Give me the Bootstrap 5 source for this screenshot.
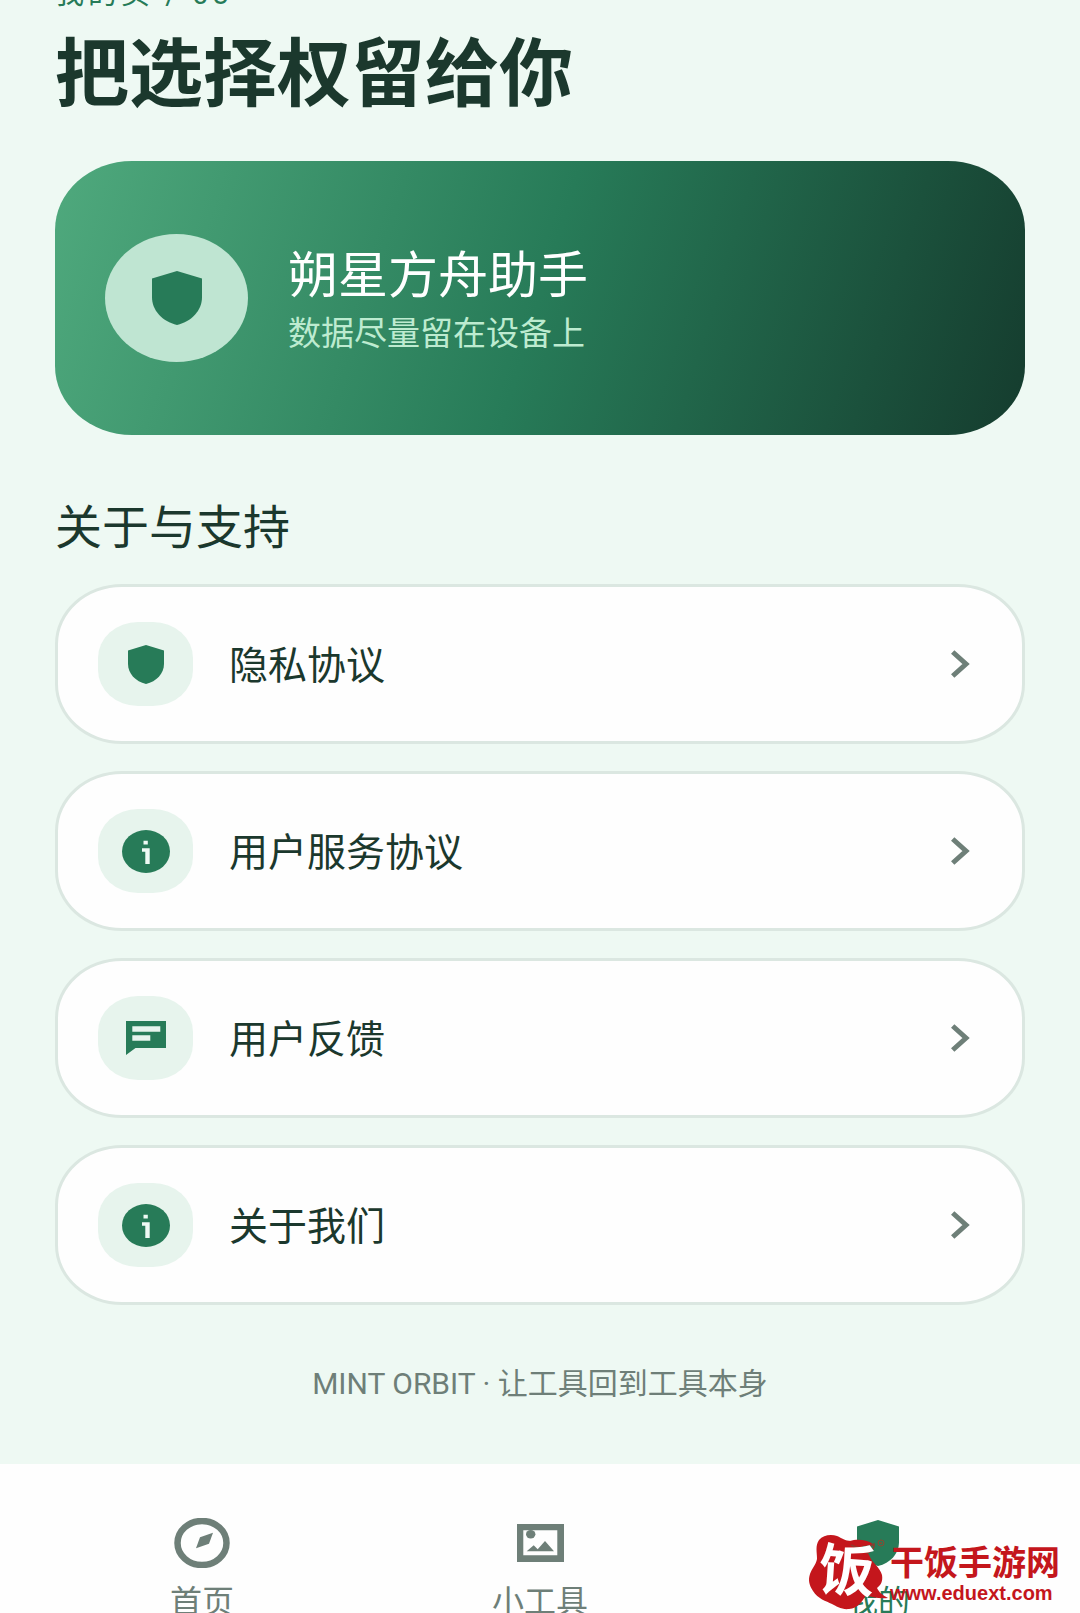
<!DOCTYPE html>
<html lang="zh-CN">
<head>
<meta charset="utf-8">
<meta name="viewport" content="width=device-width, initial-scale=1">
<title>朔星方舟助手</title>
<link href="https://cdn.jsdelivr.net/npm/bootstrap@5.3.0/dist/css/bootstrap.min.css" rel="stylesheet">
<style>
:root { --mint: #277b58; --ink: #1b382d; --soft: #6e7f78; }
body { height: 100vh; background: #eef9f3; color: var(--ink); font-family: Roboto, "Noto Sans CJK SC", sans-serif; }
svg { display: block; flex: none; }
.page-body { padding: 0 55px; }
/* the page is scrolled so that only the foot of this line shows */
.eyebrow { margin: -26px 0 0; font-size: 29px; line-height: 40px; letter-spacing: 4px; color: var(--mint); }
.page-title { margin: 16px 0 0; font-size: 74px; line-height: 90px; }
.hero { margin-top: 41px; padding: 0 50px; min-height: 274px; gap: 40px; border-radius: 77px / 69px; background: linear-gradient(107deg, #4fa97d, #277b58 50%, #153c2e); }
.hero-icon { width: 143px; height: 128px; background: #bfe5d2; color: var(--mint); }
.hero-text { padding-top: 8px; }
.hero-name { font-size: 50px; line-height: 64px; color: #fff; }
.hero-note { font-size: 33px; line-height: 52px; color: #bdebd0; }
.section-title { margin: 63px 0 0; font-size: 47px; line-height: 60px; }
.menu-list { margin-top: 26px; gap: 27px; }
.menu-item { height: 160px; padding: 0 52px 0 40px; gap: 36px; background: #fefefe; border: 3px solid #dbe7e1; border-radius: 67px / 60px; font-size: 39px; line-height: 54px; color: var(--ink); }
.menu-item .label-text { padding-top: 4px; }
.menu-icon { width: 95px; height: 84px; border-radius: 40px / 36px; background: #e7f4ed; color: var(--mint); }
.chevron { color: var(--soft); }
.slogan { margin: 58px 0 0; padding-bottom: 59px; font-size: 30px; line-height: 42px; color: var(--soft); }
.tab-bar { padding: 54px 33px 20px; background: #fefefe; }
.tab-item { gap: 14px; font-size: 32px; line-height: 40px; color: var(--soft); }
.tab-item.current { color: var(--mint); }
.tab-icon { height: 50px; }
.watermark { right: 20px; bottom: 2px; gap: 5px; color: #c4161c; }
.seal { width: 76px; height: 76px; }
.seal-char { inset: 0; font-size: 56px; font-weight: 700; line-height: 74px; color: #fff; transform: rotate(4deg); }
.site-name { font-size: 34px; font-weight: 700; line-height: 40px; }
.site-url { font: 700 20px/20px "Liberation Sans", sans-serif; }
</style>
<script src="https://cdn.jsdelivr.net/npm/bootstrap@5.3.0/dist/js/bootstrap.bundle.min.js"></script>
</head>
<body class="position-relative overflow-hidden">
<svg class="d-none" aria-hidden="true">
  <symbol id="shield" viewBox="0 0 36 39" preserveAspectRatio="none"><path fill="currentColor" d="M18 0 36 5.500V19C36 28.500 28.500 36.500 18 39 7.500 36.500 0 28.500 0 19V5.500Z"/></symbol>
  <symbol id="info" viewBox="0 0 48 43"><ellipse cx="24" cy="21.500" rx="24" ry="21.500" fill="currentColor"/><path fill="#eefaf4" d="M21.500 10.700h4.300v3.700h-4.300zM20 18.300h7.700V34h-4.400V21.800H20z"/></symbol>
  <symbol id="chat" viewBox="0 0 40 34"><path fill="currentColor" fill-rule="evenodd" d="M0 0h40v27H9.500L0 34zM6.300 5.300v5.400h28V5.300zM6.300 14.300v5.400h18v-5.400z"/></symbol>
  <symbol id="chev" viewBox="0 0 19 28"><path fill="none" stroke="currentColor" stroke-width="5" d="M1.700 2 15 14 1.700 26"/></symbol>
</svg>

<main class="page-body">
  <p class="eyebrow">我的页 / 03</p>
  <h1 class="page-title fw-bold">把选择权留给你</h1>

  <section class="hero d-flex align-items-center">
    <span class="hero-icon rounded-circle d-flex align-items-center justify-content-center"><svg width="50" height="54"><use href="#shield"/></svg></span>
    <div class="hero-text">
      <div class="hero-name">朔星方舟助手</div>
      <div class="hero-note">数据尽量留在设备上</div>
    </div>
  </section>

  <h2 class="section-title fw-normal">关于与支持</h2>
  <nav class="menu-list d-flex flex-column" aria-label="关于与支持">
    <a href="#" class="menu-item d-flex align-items-center text-decoration-none">
      <span class="menu-icon d-flex align-items-center justify-content-center"><svg width="36" height="39"><use href="#shield"/></svg></span>
      <span class="label-text flex-grow-1">隐私协议</span>
      <svg class="chevron" width="19" height="28"><use href="#chev"/></svg>
    </a>
    <a href="#" class="menu-item d-flex align-items-center text-decoration-none">
      <span class="menu-icon d-flex align-items-center justify-content-center"><svg width="48" height="43"><use href="#info"/></svg></span>
      <span class="label-text flex-grow-1">用户服务协议</span>
      <svg class="chevron" width="19" height="28"><use href="#chev"/></svg>
    </a>
    <a href="#" class="menu-item d-flex align-items-center text-decoration-none">
      <span class="menu-icon d-flex align-items-center justify-content-center"><svg width="40" height="34"><use href="#chat"/></svg></span>
      <span class="label-text flex-grow-1">用户反馈</span>
      <svg class="chevron" width="19" height="28"><use href="#chev"/></svg>
    </a>
    <a href="#" class="menu-item d-flex align-items-center text-decoration-none">
      <span class="menu-icon d-flex align-items-center justify-content-center"><svg width="48" height="43"><use href="#info"/></svg></span>
      <span class="label-text flex-grow-1">关于我们</span>
      <svg class="chevron" width="19" height="28"><use href="#chev"/></svg>
    </a>
  </nav>
  <p class="slogan text-center">MINT ORBIT · 让工具回到工具本身</p>
</main>

<nav class="tab-bar d-flex" aria-label="主导航">
  <a href="#" class="tab-item d-flex flex-column align-items-center flex-fill w-100 text-decoration-none">
    <span class="tab-icon d-flex align-items-center"><svg width="56" height="50" viewBox="0 0 56 50"><ellipse cx="28" cy="25" rx="24.500" ry="22" fill="none" stroke="currentColor" stroke-width="6.500"/><path fill="currentColor" d="M39 14.700 35 25.700 22 30.300 26 19.300z"/></svg></span>
    <span>首页</span>
  </a>
  <a href="#" class="tab-item d-flex flex-column align-items-center flex-fill w-100 text-decoration-none">
    <span class="tab-icon d-flex align-items-center"><svg width="47" height="38" viewBox="0 0 47 38"><path fill="currentColor" fill-rule="evenodd" d="M0 0h47v38H0zM6.300 6.300v25h34v-25z"/><ellipse cx="13.700" cy="10.300" rx="4.700" ry="4.200" fill="currentColor"/><path fill="currentColor" d="m9.700 27.300 7-6 4 4L28 17l9 10.300z"/></svg></span>
    <span>小工具</span>
  </a>
  <a href="#" class="tab-item current d-flex flex-column align-items-center flex-fill w-100 text-decoration-none" aria-current="page">
    <span class="tab-icon d-flex align-items-center"><svg width="42" height="46"><use href="#shield"/></svg></span>
    <span>我的</span>
  </a>
</nav>

<div class="watermark position-absolute d-flex align-items-center">
  <div class="seal position-relative">
    <svg width="76" height="76" viewBox="0 0 76 76" overflow="visible">
      <path fill="#c4161c" d="M10 5C14 0 22-1 28 1C33 3 36 6 42 6C50 7 56 12 60 20C63 28 71 32 73 40C74 46 72 50 68 53C70 57 73 60 79 63C70 64 62 62 57 60C53 67 49 73 40 74C33 75 27 71 23 69C17 66 9 64 4 56C0 50-1 45 1 39C3 33 7 30 8 24C8 17 6 11 10 5Z"/>
      <path fill="#c4161c" d="M41 6C47 4 57 4 64 9C58 12 48 12 41 6Z"/>
      <path fill="none" stroke="#8f3a2c" stroke-width="1.500" d="M42 10C49 14 58 14 65 9C66 13 62 17 57 18"/>
      <circle cx="72" cy="8" r="3" fill="none" stroke="#8f4630" stroke-width="1"/><circle cx="72" cy="8" r="1" fill="#8f4630"/>
    </svg>
    <span class="seal-char position-absolute text-center">饭</span>
  </div>
  <div>
    <div class="site-name">干饭手游网</div>
    <div class="site-url">www.eduext.com</div>
  </div>
</div>
</body>
</html>
